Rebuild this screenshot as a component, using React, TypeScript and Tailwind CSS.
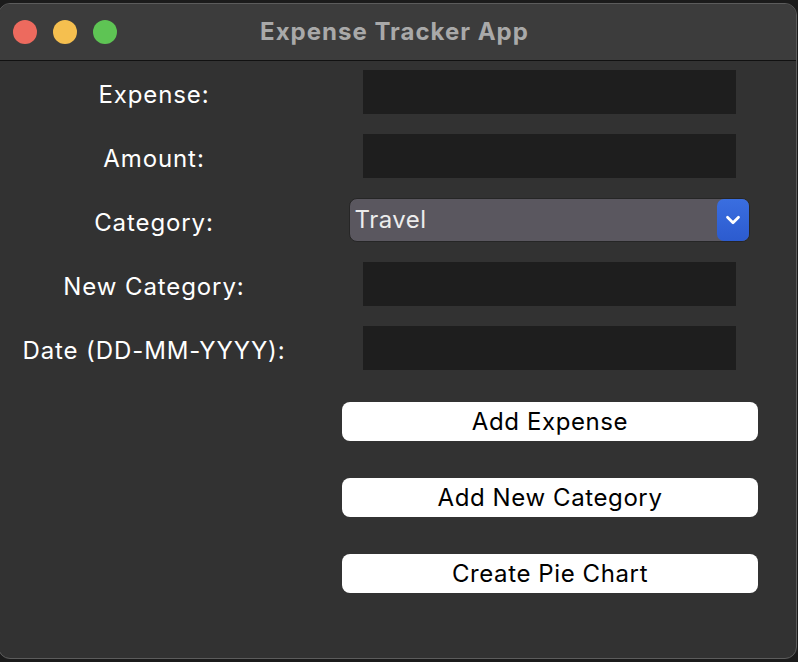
import { ChevronDown } from "lucide-react";

const labels = ["Expense:", "Amount:", "Category:", "New Category:", "Date (DD-MM-YYYY):"];
const buttons = ["Add Expense", "Add New Category", "Create Pie Chart"];

function Entry() {
    return <div className="h-[44px] w-[373px] bg-[#1e1e1e]" />;
}

function Combo() {
    return (
        <div className="flex h-[44px] w-[401px] items-center rounded-[8px] border border-[#262626] bg-[#5a575f] pl-[5px]">
            <span className="flex-1 text-[24px] tracking-[0.5px] text-[#ececec]">Travel</span>
            <div className="flex h-[42px] w-[32px] items-center justify-center rounded-[7px] bg-gradient-to-b from-[#3a6ee0] to-[#2c5bcf]">
                <ChevronDown size={22} strokeWidth={3} color="white" />
            </div>
        </div>
    );
}

export default function App() {
    return (
        <div
            className="relative h-[662px] w-[798px] overflow-hidden bg-[#1b1b1b]"
            style={{ fontFamily: "Inter, 'Noto Sans', sans-serif" }}
        >
            <div className="ml-[-2px] mt-[3px] flex h-[656px] w-[799px] flex-col overflow-hidden rounded-[12px] border border-[#5c5c5c] bg-[#323232]">
                {/* title bar */}
                <div className="relative flex h-[57px] items-center justify-center border-b border-[#111] bg-[#3c3c3c]">
                    <div className="absolute left-[14px] top-[16px] flex gap-[16px]">
                        <div className="h-[24px] w-[24px] rounded-full bg-[#ed6a5e]" />
                        <div className="h-[24px] w-[24px] rounded-full bg-[#f5bf4f]" />
                        <div className="h-[24px] w-[24px] rounded-full bg-[#5ec454]" />
                    </div>
                    <span className="mr-[6px] text-[24px] font-bold tracking-[1px] text-[#a9a9a9]">Expense Tracker App</span>
                </div>

                {/* form */}
                <div className="flex flex-col gap-[20px] pt-[9px]">
                    {labels.map((label, i) => (
                        <div key={label} className="flex h-[44px] items-center">
                            <div className="w-[310px] pt-[5px] text-center text-[24px] tracking-[0.9px] text-white">{label}</div>
                            <div className="flex w-[480px] justify-center">
                                {i === 2 ? <Combo /> : <Entry />}
                            </div>
                        </div>
                    ))}
                </div>

                <div className="ml-[311px] mt-[32px] flex w-[480px] flex-col items-center gap-[37px]">
                    {buttons.map((b) => (
                        <button
                            key={b}
                            className="flex h-[39px] w-[416px] items-center justify-center rounded-[8px] bg-white text-[24px] tracking-[0.6px] text-black"
                        >
                            {b}
                        </button>
                    ))}
                </div>
            </div>
        </div>
    );
}
